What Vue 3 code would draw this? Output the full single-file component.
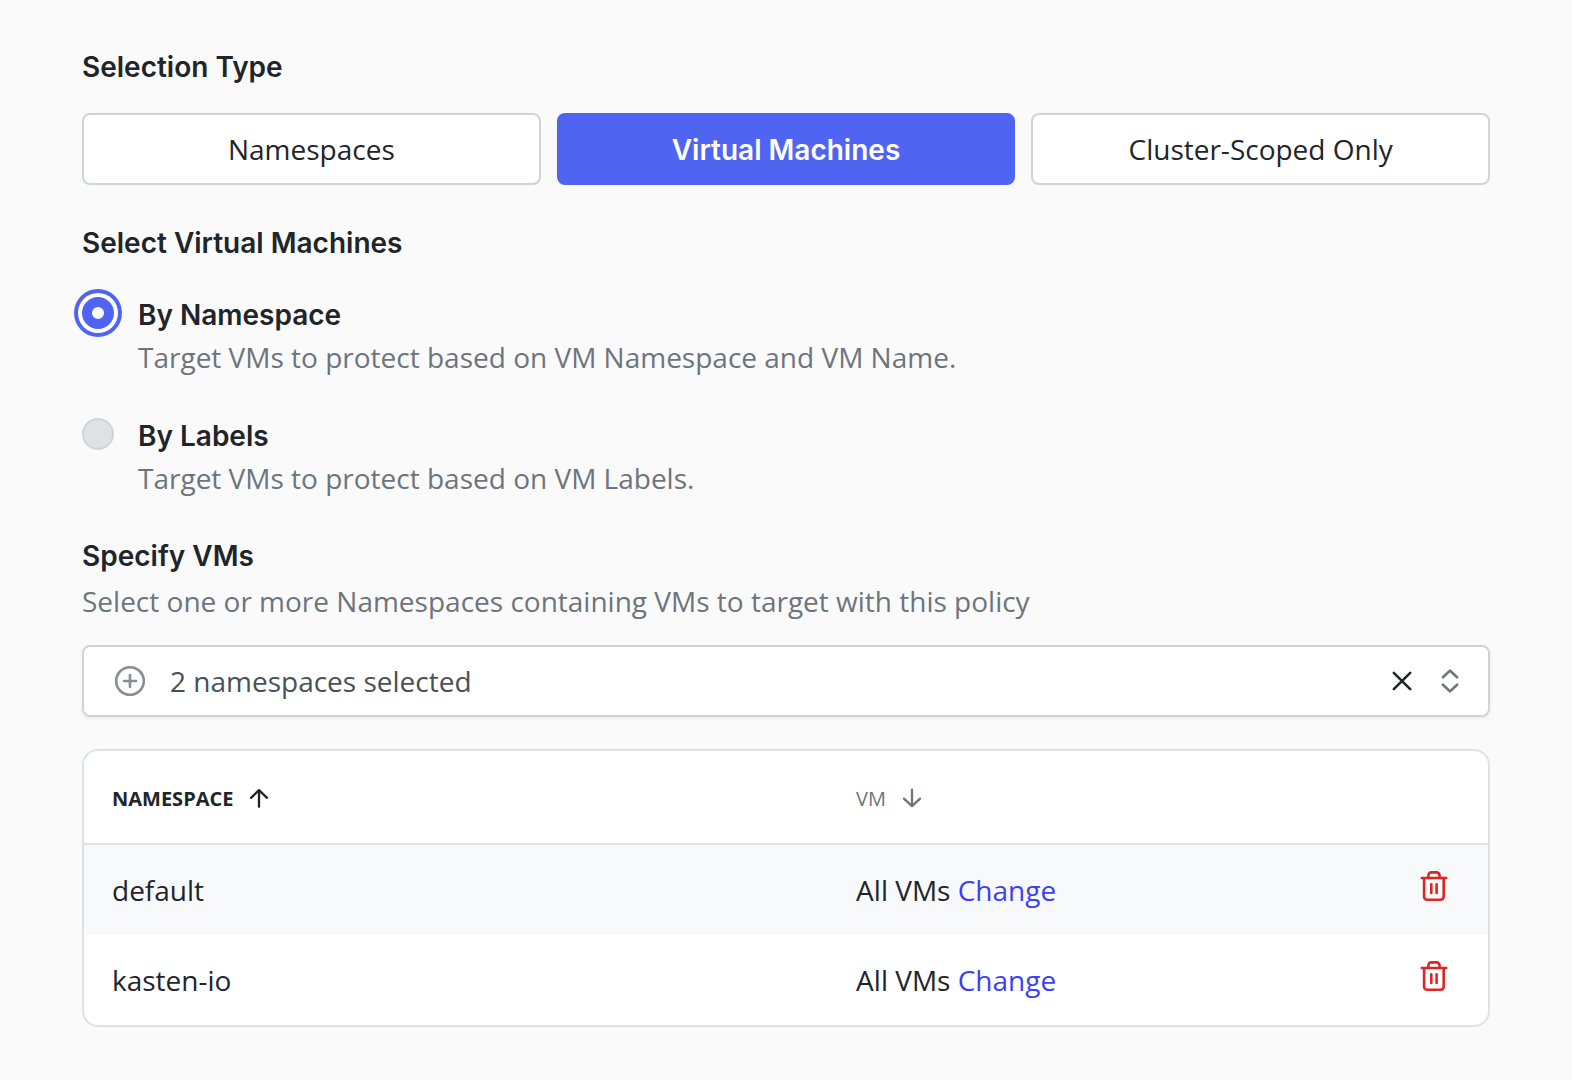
<script setup>
import { ref } from 'vue'

const types = ['Namespaces', 'Virtual Machines', 'Cluster-Scoped Only']
const selectedType = ref('Virtual Machines')

const methods = [
  { id: 'namespace', label: 'By Namespace', hint: 'Target VMs to protect based on VM Namespace and VM Name.' },
  { id: 'labels', label: 'By Labels', hint: 'Target VMs to protect based on VM Labels.' },
]
const method = ref('namespace')

const rows = ref([
  { namespace: 'default', vms: 'All VMs' },
  { namespace: 'kasten-io', vms: 'All VMs' },
])

function remove(name) {
  rows.value = rows.value.filter((row) => row.namespace !== name)
}
</script>

<template>
  <main class="form">
    <section>
      <h2 id="type-title">Selection Type</h2>
      <div class="types" role="group" aria-labelledby="type-title">
        <button
          v-for="type in types"
          :key="type"
          type="button"
          class="type"
          :class="{ active: type === selectedType }"
          :aria-pressed="type === selectedType"
          @click="selectedType = type"
        >{{ type }}</button>
      </div>
    </section>

    <section>
      <h2 id="method-title">Select Virtual Machines</h2>
      <div class="methods" role="radiogroup" aria-labelledby="method-title">
        <div v-for="m in methods" :key="m.id" class="method">
          <input :id="m.id" v-model="method" type="radio" name="method" :value="m.id" :aria-describedby="m.id + '-hint'" />
          <div class="method-text">
            <label :for="m.id">{{ m.label }}</label>
            <p :id="m.id + '-hint'" class="hint">{{ m.hint }}</p>
          </div>
        </div>
      </div>
    </section>

    <section>
      <h2><label for="namespaces">Specify VMs</label></h2>
      <p class="hint specify-hint">Select one or more Namespaces containing VMs to target with this policy</p>

      <div class="picker">
        <svg class="plus" viewBox="0 0 32 32" aria-hidden="true">
          <circle cx="16" cy="16" r="13.8" />
          <path d="M16 10v12M10 16h12" />
        </svg>
        <select id="namespaces">
          <option>{{ rows.length }} namespaces selected</option>
        </select>
        <button type="button" class="clear" aria-label="Clear selection" @click="rows = []">
          <svg viewBox="0 0 32 32"><path d="M7.8 7.8l16.4 16.4M24.2 7.8L7.8 24.2" /></svg>
        </button>
        <svg class="chevrons" viewBox="0 0 32 32" aria-hidden="true">
          <path d="M8.9 12.3L16 5.6l7.1 6.7M8.9 19.7l7.1 6.7 7.1-6.7" />
        </svg>
      </div>

      <div class="card">
        <table>
          <thead>
            <tr>
              <th class="col-namespace" scope="col" aria-sort="ascending">
                <button type="button" class="sort sorted">
                  NAMESPACE
                  <svg viewBox="0 0 24 24"><path d="M12 19.8V3.2M4 10.8l8-7.6 8 7.6" /></svg>
                </button>
              </th>
              <th scope="col">
                <button type="button" class="sort">
                  VM
                  <svg viewBox="0 0 24 24"><path d="M12 2.6v16.6M4 11.6l8 7.6 8-7.6" /></svg>
                </button>
              </th>
              <td class="col-actions"></td>
            </tr>
          </thead>
          <tbody>
            <tr v-for="row in rows" :key="row.namespace">
              <td>{{ row.namespace }}</td>
              <td>{{ row.vms }} <a href="#">Change</a></td>
              <td class="col-actions">
                <button type="button" class="trash" :aria-label="'Remove ' + row.namespace" @click="remove(row.namespace)">
                  <svg viewBox="0 0 32 32">
                    <path d="M3.8 8h24.4M10.4 8V5.4a3 3 0 0 1 3-3h5.2a3 3 0 0 1 3 3V8M6.1 8v18.8a3 3 0 0 0 3 3h13.6a3 3 0 0 0 3-3V8M13.3 14.2v8.8M18.6 14.2v8.8" />
                  </svg>
                </button>
              </td>
            </tr>
          </tbody>
        </table>
      </div>
    </section>
  </main>
</template>

<style>
body {
  margin: 0;
  background: #fafafa;
}
</style>

<style scoped>
.form {
  display: flex;
  flex-direction: column;
  gap: 37px;
  padding: 46px 82px 53px;
  color: #212529;
  font: 400 28px/40px 'Open Sans', sans-serif;
}

h2,
.method label {
  margin: 0;
  font: 600 28px/42px Inter, sans-serif;
}

button,
select {
  padding: 0;
  border: 0;
  background: none;
  color: inherit;
  font: inherit;
  cursor: pointer;
}

svg {
  display: block;
  flex: none;
  fill: none;
  stroke: currentColor;
  stroke-width: 2.6;
  stroke-linecap: round;
  stroke-linejoin: round;
}

.hint {
  margin: 0;
  color: #6c757d;
}

.types {
  display: grid;
  grid-template-columns: repeat(3, 1fr);
  gap: 16px;
  margin-top: 25px;
}

.type {
  padding: 14px;
  border: 2px solid #ced4da;
  border-radius: 8px;
  background: #fff;
}

.type.active {
  padding: 15px 14px 13px;
  border-color: #4f65f1;
  background: #4f65f1;
  color: #fff;
  font-family: Inter, sans-serif;
  font-weight: 600;
}

.methods {
  display: flex;
  flex-direction: column;
  gap: 38px;
  margin-top: 30px;
}

.method {
  display: flex;
  gap: 24px;
}

.method-text {
  display: flex;
  flex-direction: column;
  gap: 1px;
}

.method input {
  appearance: none;
  flex: none;
  width: 32px;
  height: 32px;
  margin: 3px 0 0;
  border: 2px solid #ced4da;
  border-radius: 50%;
  background: #dee2e6;
}

.method input:checked {
  border: 10px solid #4f65f1;
  background: #fff;
  box-shadow: 0 0 0 4px #fff, 0 0 0 8px #4f65f1;
}

.specify-hint {
  margin-top: 4px;
}

.picker {
  display: flex;
  align-items: center;
  margin-top: 24px;
  padding: 14px 22px 14px 30px;
  border: 2px solid #ced4da;
  border-radius: 8px;
  background: #fff;
  box-shadow: 0 2px 4px rgba(0, 0, 0, 0.05);
}

.picker svg,
.trash svg {
  width: 32px;
  height: 32px;
}

.plus {
  color: #868e96;
}

.picker select {
  appearance: none;
  flex: 1;
  height: 40px;
  padding-left: 24px;
  color: #495057;
}

.chevrons {
  margin-left: 16px;
  color: #6c757d;
}

.card {
  margin-top: 32px;
  overflow: hidden;
  border: 2px solid #dee2e6;
  border-radius: 16px;
  background: #fff;
}

table {
  width: 100%;
  border-collapse: collapse;
  table-layout: fixed;
}

th,
td {
  padding: 25px 28px;
  text-align: left;
  vertical-align: middle;
}

thead tr {
  border-bottom: 2px solid #dee2e6;
}

thead th {
  padding: 28px 28px 24px;
  font-weight: 400;
}

.col-namespace {
  width: 53%;
  box-sizing: border-box;
}

td.col-actions {
  width: 32px;
  padding: 0 38px 0 28px;
}

.sort {
  display: flex;
  align-items: center;
  gap: 14px;
  color: #6c757d;
  font-size: 20px;
  line-height: 40px;
}

.sort svg {
  width: 24px;
  height: 24px;
  stroke-width: 2.3;
}

.sort.sorted {
  color: #212529;
  font-weight: 700;
}

tbody tr:nth-child(odd) {
  background: #f8f9fb;
}

td a {
  color: #3b3ff5;
  text-decoration: none;
}

.trash {
  display: block;
  margin-bottom: 8px;
  color: #e02424;
}
</style>
